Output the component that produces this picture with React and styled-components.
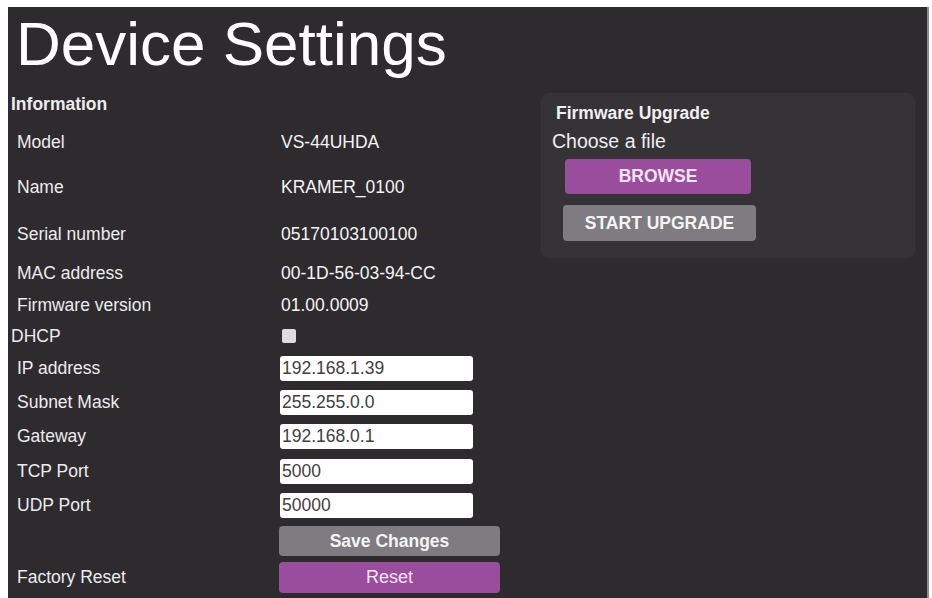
import React from "react";
import styled, { createGlobalStyle } from "styled-components";

const GlobalStyle = createGlobalStyle`
  html, body {
    margin: 0;
    background: #ffffff;
    font-family: "Liberation Sans", Arial, sans-serif;
  }
`;

const Panel = styled.div`
  margin: 7px 3px 0 8px;
  min-height: 591px;
  box-sizing: border-box;
  padding-top: 6px;
  background: #2e2b2f;
  border-right: 2px solid #8d8b8e;
  color: #f2f2f2;
`;

const Title = styled.h1`
  margin: 0;
  padding-left: 8px;
  font-size: 62px;
  line-height: 61px;
  font-weight: 400;
  color: #ffffff;
`;

const Body = styled.div`
  display: flex;
  margin-top: 12px;
`;

const InfoColumn = styled.div`
  width: 533px;
  flex: none;
`;

const Row = styled.div`
  display: flex;
  align-items: center;
  height: ${(p) => p.$h}px;
`;

const Label = styled.div`
  width: ${(p) => (p.$flush ? 270 : 264)}px;
  padding-left: ${(p) => (p.$flush ? 3 : 9)}px;
  flex: none;
  font-size: 17.5px;
  font-weight: ${(p) => (p.$bold ? 700 : 400)};
  color: #ececec;
`;

const Value = styled.div`
  font-size: 17.5px;
  color: #f4f4f4;
`;

const Check = styled.input`
  appearance: none;
  margin: 0 0 0 1px;
  width: 14px;
  height: 14px;
  border-radius: 2px;
  background: #dedcdf;
`;

const Field = styled.input`
  box-sizing: border-box;
  width: 193px;
  height: 25px;
  margin-left: -1px;
  padding: 0 2px;
  border: none;
  border-radius: 3px;
  background: #ffffff;
  font-family: inherit;
  font-size: 17.5px;
  color: #414042;
  outline: none;
`;

const Button = styled.button`
  box-sizing: border-box;
  width: ${(p) => p.$w}px;
  height: ${(p) => p.$hgt}px;
  margin-left: ${(p) => p.$ml || 0}px;
  border: none;
  border-radius: 4px;
  background: ${(p) => (p.$purple ? "#9a4c9d" : "#7e7c80")};
  color: ${(p) => (p.$purple ? "#f6e6f6" : "#f4f4f4")};
  font-family: inherit;
  font-size: ${(p) => p.$fs || 17.5}px;
  font-weight: ${(p) => (p.$bold ? 700 : 400)};
  cursor: pointer;
`;

const Card = styled.div`
  width: 374px;
  margin-top: 7px;
  height: 165px;
  box-sizing: border-box;
  padding: 10px 0 0 15px;
  border-radius: 8px;
  background: #363337;
`;

const CardTitle = styled.div`
  font-size: 17.5px;
  font-weight: 700;
  line-height: 20px;
  color: #f0f0f0;
`;

const CardText = styled.div`
  margin: 8px 0 8px -4px;
  font-size: 19.5px;
  line-height: 20px;
  color: #eeeeee;
`;

const ButtonStack = styled.div`
  display: flex;
  flex-direction: column;
  align-items: flex-start;
  gap: 11px;
`;

const info = [
  ["Model", "VS-44UHDA", 40],
  ["Name", "KRAMER_0100", 50],
  ["Serial number", "05170103100100", 44],
  ["MAC address", "00-1D-56-03-94-CC", 34],
  ["Firmware version", "01.00.0009", 30],
];

const network = [
  ["IP address", "192.168.1.39", 32],
  ["Subnet Mask", "255.255.0.0", 36],
  ["Gateway", "192.168.0.1", 32],
  ["TCP Port", "5000", 38],
  ["UDP Port", "50000", 30],
];

export default function App() {
  return (
    <>
      <GlobalStyle />
      <Panel>
        <Title>Device Settings</Title>
        <Body>
          <InfoColumn>
            <Row $h={36}>
              <Label $flush $bold>Information</Label>
            </Row>
            {info.map(([k, v, h]) => (
              <Row key={k} $h={h}>
                <Label>{k}</Label>
                <Value>{v}</Value>
              </Row>
            ))}
            <Row $h={32}>
              <Label $flush>DHCP</Label>
              <Check type="checkbox" readOnly />
            </Row>
            {network.map(([k, v, h]) => (
              <Row key={k} $h={h}>
                <Label>{k}</Label>
                <Field defaultValue={v} />
              </Row>
            ))}
            <Row $h={42}>
              <Label />
              <Button $w={221} $hgt={30} $ml={-2} $bold>Save Changes</Button>
            </Row>
            <Row $h={31}>
              <Label>Factory Reset</Label>
              <Button $w={221} $hgt={31} $ml={-2} $purple $fs={18}>Reset</Button>
            </Row>
          </InfoColumn>
          <Card>
            <CardTitle>Firmware Upgrade</CardTitle>
            <CardText>Choose a file</CardText>
            <ButtonStack>
              <Button $w={186} $hgt={35} $ml={9} $purple $bold>BROWSE</Button>
              <Button $w={193} $hgt={36} $ml={7} $bold>START UPGRADE</Button>
            </ButtonStack>
          </Card>
        </Body>
      </Panel>
    </>
  );
}
